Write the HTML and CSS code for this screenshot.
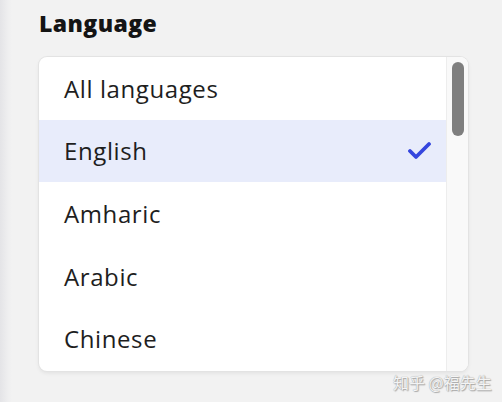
FILE: index.html
```html
<!DOCTYPE html>
<html lang="en">
<head>
  <meta charset="UTF-8" />
  <title>Language</title>
  <link rel="stylesheet" href="styles.css">
</head>
<body>
  <div class="edge"></div>
  <div class="panel">
    <h3 class="label">Language</h3>
    <div class="dropdown">
      <ul class="options">
        <li>All languages</li>
        <li class="selected">English
          <svg class="check" width="24" height="20" viewBox="0 0 24 20">
            <path d="M2 10 L8 16 L21 3" fill="none" stroke="#3546de" stroke-width="3.8" stroke-linecap="round" stroke-linejoin="round"/>
          </svg>
        </li>
        <li>Amharic</li>
        <li>Arabic</li>
        <li>Chinese</li>
      </ul>
      <div class="scrollbar"><div class="thumb"></div></div>
    </div>
  </div>
  <div class="watermark">知乎 @福先生</div>
</body>
</html>
```
FILE: styles.css
```css
html, body {
  margin: 0;
  height: 100%;
}
body {
  background: #f2f2f2;
  font-family: "Open Sans", Lato, sans-serif;
  color: #1e1e1e;
  display: flex;
  overflow: hidden;
}
.edge {
  width: 12px;
  background: linear-gradient(to right, #e4e4e7, #efeff0 70%, #f2f2f2);
}
.panel {
  padding: 9px 0 0 27px;
}
.label {
  margin: 0 0 20px;
  font-size: 23px;
  line-height: 28px;
  font-weight: 800;
  letter-spacing: 0.4px;
  color: #141414;
}
.dropdown {
  width: 429px;
  height: 314px;
  background: #fff;
  border-radius: 8px;
  box-shadow: 0 0 0 1px #e3e3e3, 0 2px 4px rgba(0,0,0,0.08);
  display: flex;
  overflow: hidden;
}
.options {
  list-style: none;
  margin: 0;
  padding: 0;
  flex: 1;
}
.options li {
  height: 62.6px;
  display: flex;
  align-items: center;
  justify-content: space-between;
  padding: 0 14px 0 25px;
  font-size: 24px;
  letter-spacing: 0.6px;
  box-sizing: border-box;
}
.options li.selected {
  background: #e8ecfb;
}
.check {
  margin-top: 1px;
}
.scrollbar {
  width: 22px;
  background: #f9f9f9;
  border-left: 1px solid #ededed;
  padding: 5px 0 0 5px;
  box-sizing: border-box;
}
.thumb {
  width: 12px;
  height: 74px;
  border-radius: 6px;
  background: #7f7f7f;
}
.watermark {
  position: absolute;
  left: 393px;
  top: 370px;
  font-family: "Noto Sans CJK SC", sans-serif;
  font-size: 16px;
  color: #f4f4f4;
  text-shadow: 0 0 1px #8a8a8a, 1px 1px 1px #aaa;
}
```
